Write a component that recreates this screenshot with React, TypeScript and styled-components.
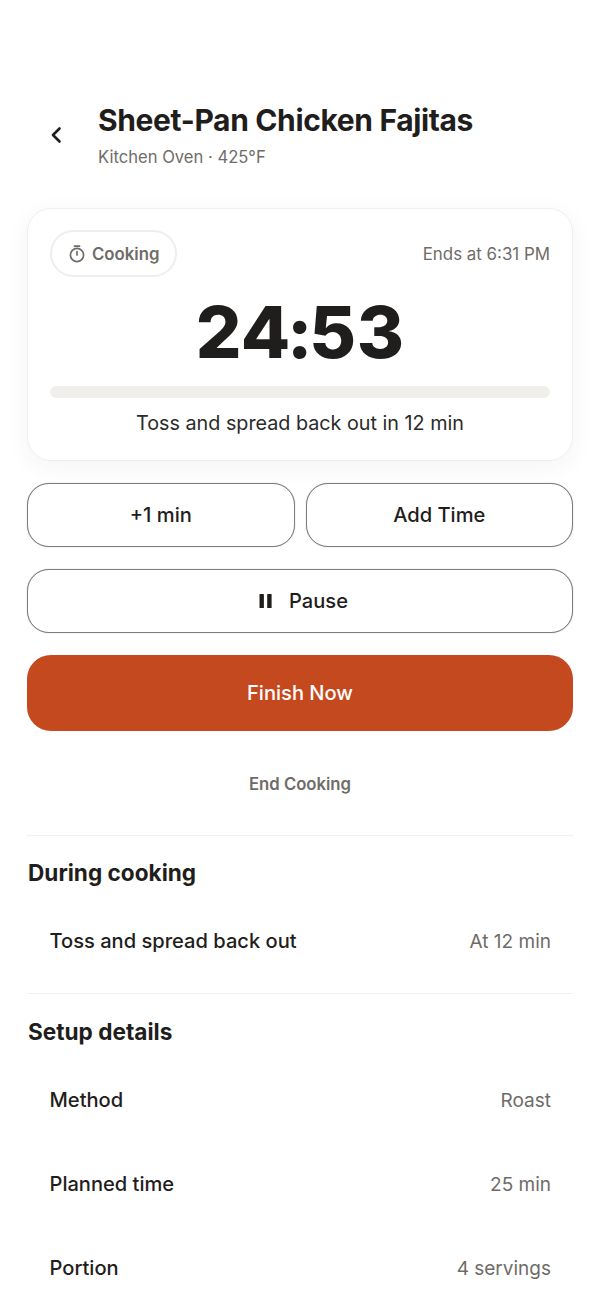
import styled, { createGlobalStyle } from "styled-components";

const GlobalStyle = createGlobalStyle`
  html, body {
    margin: 0;
    padding: 0;
    background: #fff;
    height: 1304px;
    overflow: hidden;
  }
  body {
    font-family: Inter, "Liberation Sans", sans-serif;
    color: #1f1e1c;
  }
`;

const details = [
  { label: "Method", value: "Roast" },
  { label: "Planned time", value: "25 min" },
  { label: "Portion", value: "4 servings" },
];

export default function App() {
  return (
    <Page>
      <GlobalStyle />
      <Header>
        <BackButton aria-label="Back">
          <svg width="24" height="24" viewBox="0 0 24 24" fill="none" stroke="#1f1e1c" strokeWidth="2.6" strokeLinecap="round" strokeLinejoin="round">
            <path d="M15.5 5.5 9 12l6.5 6.5" />
          </svg>
        </BackButton>
        <div>
          <Title>Sheet-Pan Chicken Fajitas</Title>
          <Subtitle>Kitchen Oven · 425°F</Subtitle>
        </div>
      </Header>

      <TimerCard>
        <CardTop>
          <StatusPill>
            <svg width="18" height="18" viewBox="0 0 18 18" fill="none" stroke="#6f6c67" strokeWidth="1.7" strokeLinecap="round">
              <path d="M6.5 1.2h5" />
              <circle cx="9" cy="10" r="6.6" />
              <path d="M9 6.6V10" />
            </svg>
            Cooking
          </StatusPill>
          <EndsAt>Ends at 6:31 PM</EndsAt>
        </CardTop>
        <Countdown>24:53</Countdown>
        <Progress />
        <NextStep>Toss and spread back out in 12 min</NextStep>
      </TimerCard>

      <ButtonRow>
        <OutlineButton>+1 min</OutlineButton>
        <OutlineButton>Add Time</OutlineButton>
      </ButtonRow>
      <PauseButton>
        <svg width="14" height="16" viewBox="0 0 14 16" fill="#1f1e1c">
          <rect x="0.5" y="1" width="4.4" height="14" rx="0.6" />
          <rect x="8.2" y="1" width="4.4" height="14" rx="0.6" />
        </svg>
        Pause
      </PauseButton>
      <FinishButton>Finish Now</FinishButton>
      <EndLink>End Cooking</EndLink>

      <Section>
        <SectionTitle>During cooking</SectionTitle>
        <Row>
          <RowLabel>Toss and spread back out</RowLabel>
          <RowValue>At 12 min</RowValue>
        </Row>
      </Section>

      <Section>
        <SectionTitle>Setup details</SectionTitle>
        {details.map((d) => (
          <Row key={d.label}>
            <RowLabel>{d.label}</RowLabel>
            <RowValue>{d.value}</RowValue>
          </Row>
        ))}
      </Section>
    </Page>
  );
}

const Page = styled.div`
  width: 600px;
  box-sizing: border-box;
  padding: 100px 27px 0;
`;

const Header = styled.header`
  display: flex;
  gap: 29px;
  align-items: flex-start;
  padding-left: 15px;
  height: 108px;
`;

const BackButton = styled.button`
  width: 27px;
  height: 27px;
  margin-top: 21px;
  padding: 0;
  border: none;
  background: none;
  display: flex;
  align-items: center;
  justify-content: center;
`;

const Title = styled.h1`
  margin: 0;
  font-size: 30px;
  line-height: 40px;
  font-weight: 700;
  letter-spacing: -0.36px;
`;

const Subtitle = styled.p`
  margin: 7px 0 0;
  font-size: 16.6px;
  line-height: 20px;
  color: #6f6c67;
`;

const TimerCard = styled.section`
  box-sizing: border-box;
  height: 253px;
  padding: 21px 22px 0;
  border: 1px solid #f1efeb;
  border-radius: 24px;
  background: #fff;
  box-shadow: 0 6px 24px rgba(40, 30, 20, 0.05);
`;

const CardTop = styled.div`
  display: flex;
  justify-content: space-between;
  align-items: center;
`;

const StatusPill = styled.div`
  box-sizing: border-box;
  height: 47px;
  padding: 0 15px 0 16px;
  display: flex;
  align-items: center;
  gap: 6px;
  border: 2px solid #f0eeea;
  border-radius: 24px;
  font-size: 16.8px;
  font-weight: 600;
  color: #6f6c67;
`;

const EndsAt = styled.span`
  font-size: 16.9px;
  color: #6f6c67;
`;

const Countdown = styled.div`
  margin-top: 15px;
  text-align: center;
  font-size: 72px;
  line-height: 80px;
  font-weight: 850;
  letter-spacing: 0.9px;
  font-variant-numeric: tabular-nums;
`;

const Progress = styled.div`
  margin-top: 14px;
  height: 12px;
  border-radius: 6px;
  background: #f1efeb;
`;

const NextStep = styled.p`
  margin: 11px 0 0;
  text-align: center;
  font-size: 19.75px;
  line-height: 28px;
  color: #2b2a28;
`;

const ButtonRow = styled.div`
  display: grid;
  grid-template-columns: 1fr 1fr;
  gap: 11px;
  margin-top: 22px;
`;

const OutlineButton = styled.button`
  box-sizing: border-box;
  height: 64px;
  padding-top: 1px;
  border: 1px solid #807c77;
  border-radius: 22px;
  background: #fff;
  box-shadow: 0 0 1px rgba(128, 124, 119, 0.8);
  color: #1f1e1c;
  font-family: inherit;
  font-size: 20.1px;
  font-weight: 550;
`;

const PauseButton = styled(OutlineButton)`
  width: 100%;
  margin-top: 22px;
  padding-left: 13px;
  display: flex;
  align-items: center;
  justify-content: center;
  gap: 16px;
`;

const FinishButton = styled.button`
  display: block;
  width: 100%;
  height: 76px;
  margin-top: 22px;
  padding-top: 1px;
  border: none;
  border-radius: 24px;
  background: #c5491e;
  color: #fff;
  font-family: inherit;
  font-size: 20.1px;
  font-weight: 550;
`;

const EndLink = styled.div`
  margin-top: 42px;
  text-align: center;
  font-size: 16.7px;
  line-height: 22px;
  font-weight: 580;
  color: #6f6c67;
`;

const Section = styled.section`
  margin-top: 40px;
  border-top: 1px solid #f3f1ee;
  padding-top: 21px;

  & + & {
    margin-top: 10px;
    padding-top: 22px;
  }
`;

const SectionTitle = styled.h2`
  margin: 0 0 12px;
  padding-left: 1px;
  font-size: 22.6px;
  line-height: 32px;
  font-weight: 650;
`;

const Row = styled.div`
  height: 84px;
  box-sizing: border-box;
  padding: 0 22px 0 22.5px;
  display: flex;
  justify-content: space-between;
  align-items: center;

  ${SectionTitle} + & {
    margin-top: -2px;
  }
`;

const RowLabel = styled.span`
  font-size: 20.1px;
  font-weight: 550;
`;

const RowValue = styled.span`
  font-size: 19px;
  color: #6f6c67;
`;
